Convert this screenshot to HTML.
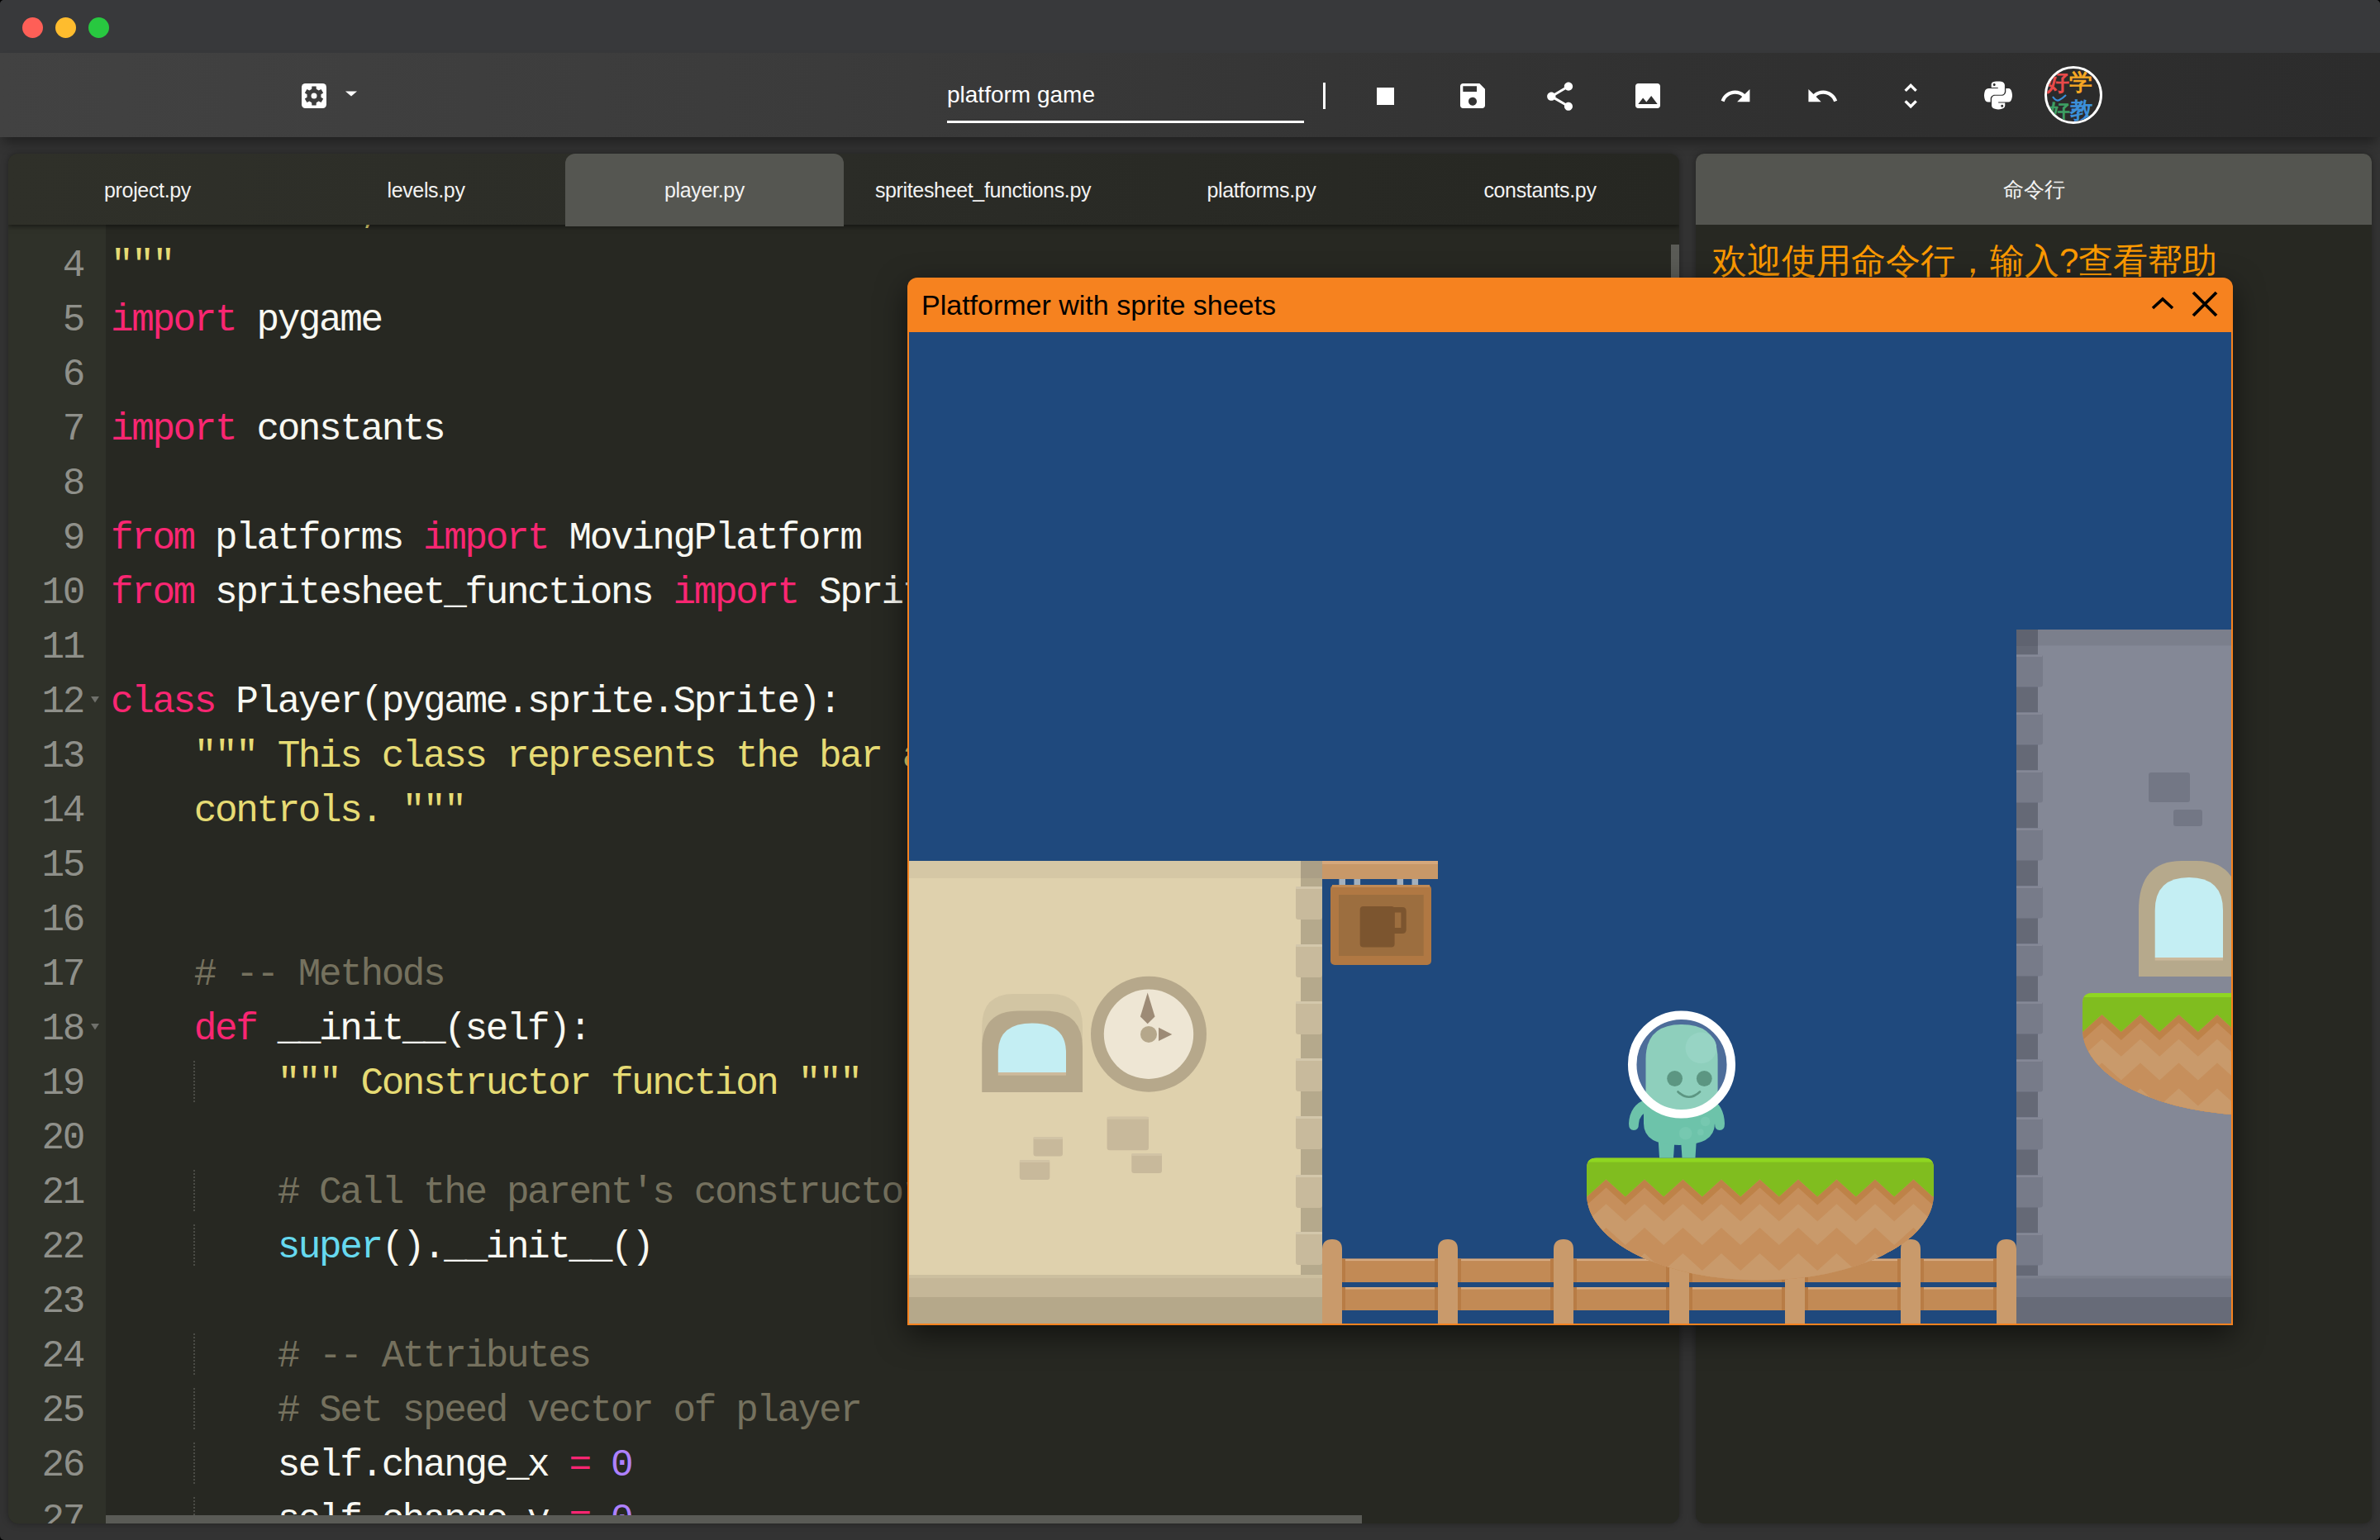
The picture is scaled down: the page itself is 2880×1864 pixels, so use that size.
<!DOCTYPE html>
<html><head><meta charset="utf-8">
<style>
*{margin:0;padding:0;box-sizing:border-box}
html{background:#000}
html,body{width:2880px;height:1864px;overflow:hidden;font-family:"Liberation Sans",sans-serif}
body{background:#333;border-radius:5px;position:relative}
.abs{position:absolute}
#title{left:0;top:0;width:2880px;height:64px;background:#38393b}
.tl{position:absolute;top:21px;width:25px;height:25px;border-radius:50%}
#toolbar{left:0;top:64px;width:2880px;height:102px;background:linear-gradient(90deg,#424242 0%,#3b3b3b 35%,#313131 70%,#2c2c2c 100%);box-shadow:0 10px 14px -4px rgba(0,0,0,.4);z-index:4}
#editor{left:10px;top:186px;width:2022px;height:1658px;background:#272822;border-radius:12px;overflow:hidden;box-shadow:0 0 8px rgba(0,0,0,.35)}
#tabs{left:0;top:0;width:2022px;height:86px;background:linear-gradient(90deg,#2f3029 0%,#2b2c27 50%,#262722 100%);box-shadow:0 2px 6px rgba(0,0,0,.5);z-index:5}
.tab{position:absolute;top:0;height:86px;width:337px;color:#f2f2f2;font-size:25px;text-align:center;line-height:88px;letter-spacing:-0.35px}
.tab.act{background:#555651;border-radius:12px 12px 0 0;height:88px}
#gutter{left:0;top:0;width:118px;height:1658px;background:#2f3129;overflow:hidden}
#code{left:118px;top:0;width:1904px;height:1658px;overflow:hidden}
pre.src{left:6px;top:37px;letter-spacing:-2.4px}
pre.lnum{right:27px;top:37px;text-align:right;color:#8f908a;letter-spacing:-2.4px}
.ln{position:absolute;right:0;width:118px;text-align:right;padding-right:27px;color:#8f908a}
pre{font-family:"Liberation Mono",monospace;font-size:46px;line-height:66px;color:#f8f8f2;position:absolute;white-space:pre}
.k{color:#f92672}.s{color:#e6db74}.c{color:#75715e}.b{color:#66d9ef}.n{color:#ae81ff}
#console{left:2052px;top:186px;width:818px;height:1658px;background:#272822;border-radius:10px;overflow:hidden;box-shadow:0 0 8px rgba(0,0,0,.35)}
#chead{left:0;top:0;width:818px;height:86px;background:#545550;color:#f2f2f2;font-size:25px;text-align:center;line-height:86px}
#game{z-index:10;left:1098px;top:336px;width:1604px;height:1268px;background:#f6821f;border-radius:12px 12px 0 0;box-shadow:0 12px 36px rgba(0,0,0,.55)}
#ghead{left:0;top:0;width:1604px;height:66px;color:#000;font-size:34px;line-height:66px;padding-left:17px}
.g{left:224px;width:2px;height:50px;background:repeating-linear-gradient(180deg,#4b4c46 0 2px,transparent 2px 4px);z-index:2}
@media (max-width:2000px){html{zoom:0.5}}
</style></head><body>
<div id="title" class="abs">
  <div class="tl" style="left:27px;background:#fe5f57"></div>
  <div class="tl" style="left:67px;background:#febc2e"></div>
  <div class="tl" style="left:107px;background:#28c840"></div>
</div>
<div id="toolbar" class="abs">
  <svg class="abs" style="left:365px;top:37px" width="30" height="30" viewBox="0 0 30 30"><rect x="0" y="0" width="30" height="30" rx="4.5" fill="#fff"/><g transform="translate(15,15)"><path fill="#3d3d3d" d="M-2.80,-8.13 L-2.63,-11.40 L2.63,-11.40 L2.80,-8.13 L5.64,-6.49 L8.56,-7.98 L11.19,-3.42 L8.44,-1.64 L8.44,1.64 L11.19,3.42 L8.56,7.98 L5.64,6.49 L2.80,8.13 L2.63,11.40 L-2.63,11.40 L-2.80,8.13 L-5.64,6.49 L-8.56,7.98 L-11.19,3.42 L-8.44,1.64 L-8.44,-1.64 L-11.19,-3.42 L-8.56,-7.98 L-5.64,-6.49Z"/><circle r="3.5" fill="#fff"/></g></svg>
  <svg class="abs" style="left:417px;top:45px" width="16" height="8" viewBox="0 0 16 8"><path d="M1 1.5 L15 1.5 L8 7.5Z" fill="#fff"/></svg>
  <div class="abs" style="left:1146px;top:31px;font-size:28px;color:#fff;line-height:40px">platform game</div>
  <div class="abs" style="left:1146px;top:82px;width:432px;height:2.5px;background:#fff"></div>
  <div class="abs" style="left:1601px;top:36px;width:2.5px;height:32px;background:#fff"></div>
  <div class="abs" style="left:1666px;top:42px;width:21px;height:21px;background:#fff"></div>
  <svg class="abs" style="left:1761.5px;top:31.8px" width="40" height="40" viewBox="0 0 24 24"><path fill="#fff" d="M17 3H5c-1.11 0-2 .9-2 2v14c0 1.1.89 2 2 2h14c1.1 0 2-.9 2-2V7l-4-4zm-5 16c-1.66 0-3-1.34-3-3s1.34-3 3-3 3 1.34 3 3-1.34 3-3 3zm3-10H5V5h10v4z"/></svg>
  <svg class="abs" style="left:1866.8px;top:31.6px" width="41.3" height="41.3" viewBox="0 0 24 24"><path fill="#fff" d="M18 16.08c-.76 0-1.44.3-1.96.77L8.91 12.7c.05-.23.09-.46.09-.7s-.04-.47-.09-.7l7.05-4.11c.54.5 1.250.81 2.04.81 1.66 0 3-1.34 3-3s-1.34-3-3-3-3 1.34-3 3c0 .24.04.47.09.7L8.04 9.81C7.5 9.310 6.79 9 6 9c-1.66 0-3 1.34-3 3s1.34 3 3 3c.79 0 1.5-.31 2.04-.81l7.12 4.16c-.05.21-.08.43-.08.65 0 1.61 1.31 2.92 2.92 2.92 1.61 0 2.92-1.31 2.92-2.92s-1.31-2.92-2.92-2.92z"/></svg>
  <svg class="abs" style="left:1974px;top:31.8px" width="40" height="40" viewBox="0 0 24 24"><path fill="#fff" d="M21 19V5c0-1.1-.9-2-2-2H5c-1.1 0-2 .9-2 2v14c0 1.1.9 2 2 2h14c1.1 0 2-.9 2-2zM8.5 13.5l2.5 3.01L14.5 12l4.5 6H5l3.5-4.5z"/></svg>
  <svg class="abs" style="left:2079.8px;top:31.9px" width="40.8" height="40.8" viewBox="0 0 24 24"><path fill="#fff" d="M18.4 10.6C16.55 8.99 14.150 8 11.5 8c-4.65 0-8.58 3.03-9.96 7.22L3.9 16c1.05-3.19 4.05-5.5 7.6-5.5 1.95 0 3.73.72 5.12 1.88L13 16h9V7l-3.6 3.6z"/></svg>
  <svg class="abs" style="left:2185.4px;top:31.9px" width="40.8" height="40.8" viewBox="0 0 24 24"><path fill="#fff" d="M12.5 8c-2.65 0-5.05.99-6.9 2.6L2 7v9h9l-3.62-3.620c1.39-1.16 3.16-1.88 5.12-1.88 3.54 0 6.550 2.31 7.6 5.5l2.37-.78C21.08 11.03 17.15 8 12.5 8z"/></svg>
  <svg class="abs" style="left:2291.5px;top:31.8px" width="40.3" height="40.3" viewBox="0 0 24 24"><path fill="#fff" d="M12 5.83L15.17 9l1.41-1.41L12 3 7.41 7.59 8.83 9 12 5.83zm0 12.34L8.83 15l-1.41 1.41L12 21l4.59-4.59L15.17 15 12 18.17z"/></svg>
  <svg class="abs" style="left:2401px;top:32.3px" width="34" height="38.9" viewBox="0 0 448 512"><path fill="#fff" d="M439.8 200.5c-7.7-30.9-22.3-54.2-53.4-54.2h-40.1v47.4c0 36.8-31.2 67.8-66.8 67.8H172.7c-29.2 0-53.4 25-53.4 54.3v101.8c0 29 25.2 46 53.4 54.3 33.8 9.9 66.3 11.7 106.8 0 26.9-7.8 53.4-23.5 53.4-54.3v-40.7H226.2v-13.6h160.2c31.1 0 42.6-21.7 53.4-54.2 11.2-33.5 10.7-65.7 0-108.6zM286.2 404c11.1 0 20.1 9.1 20.1 20.3 0 11.3-9 20.4-20.1 20.4-11 0-20.1-9.2-20.1-20.4.1-11.3 9.1-20.3 20.1-20.3zM167.8 248.1h106.8c29.7 0 53.4-24.5 53.4-54.3V91.9c0-29-24.4-50.7-53.4-55.6-35.8-5.9-74.7-5.6-106.8.1-45.2 8-53.4 24.7-53.4 55.6v40.7h106.9v13.6h-147c-31.1 0-58.3 18.7-66.8 54.2-9.8 40.7-10.200 66.1 0 108.6 7.6 31.6 25.7 54.2 56.8 54.2H101v-48.8c0-35.3 30.5-66.4 66.8-66.4zm-6.7-142.6c-11.1 0-20.1-9.1-20.1-20.3.1-11.3 9-20.4 20.1-20.4 11 0 20.1 9.2 20.1 20.4s-9 20.3-20.1 20.3z"/></svg>
  <div class="abs" style="left:2474px;top:16px;width:70px;height:70px;border-radius:50%;border:3px solid #fff;background:#2b2b2b;overflow:hidden">
    <div class="abs" style="left:-1px;top:2px;font-size:28px;line-height:30px;font-weight:bold;color:#e84a4a">好</div>
    <div class="abs" style="left:27px;top:2px;font-size:28px;line-height:30px;font-weight:bold;color:#f5a623">学</div>
    <div class="abs" style="left:2px;top:38px;font-size:26px;line-height:28px;font-weight:bold;color:#3d9e63">好</div>
    <div class="abs" style="left:28px;top:36px;font-size:28px;line-height:30px;font-weight:bold;color:#3b8fd9">教</div>
    <svg class="abs" style="left:6px;top:31px" width="18" height="10" viewBox="0 0 18 10"><path d="M1,3 Q5,9 9,7 Q13,5 17,1" stroke="#3b8fd9" stroke-width="2.2" fill="none"/></svg>
  </div>
</div>
<div id="editor" class="abs">
  <div id="tabs" class="abs">
    <div class="tab" style="left:0">project.py</div>
    <div class="tab" style="left:337px">levels.py</div>
    <div class="tab act" style="left:674px">player.py</div>
    <div class="tab" style="left:1011px">spritesheet_functions.py</div>
    <div class="tab" style="left:1348px">platforms.py</div>
    <div class="tab" style="left:1685px">constants.py</div>
  </div>
  <div id="gutter" class="abs"><pre class="lnum">3
4
5
6
7
8
9
10
11
12
13
14
15
16
17
18
19
20
21
22
23
24
25
26
27</pre></div>
    <div class="abs" style="left:118px;top:1648px;width:1520px;height:10px;background:#5a5b56;z-index:3"></div>
  <div class="abs" style="left:2012px;top:110px;width:10px;height:1200px;background:#5a5b56;z-index:3"></div>
  <div class="abs g" style="top:1098px"></div><div class="abs g" style="top:1230px"></div><div class="abs g" style="top:1296px"></div><div class="abs g" style="top:1428px"></div><div class="abs g" style="top:1494px"></div><div class="abs g" style="top:1560px"></div><div class="abs g" style="top:1626px"></div>
  <svg class="abs" style="left:100px;top:657.3px;z-index:2" width="10" height="7.5" viewBox="0 0 10 7.5"><path d="M0,0 L10,0 L5,7.5Z" fill="#6f706b"/></svg><svg class="abs" style="left:100px;top:1053.3px;z-index:2" width="10" height="7.5" viewBox="0 0 10 7.5"><path d="M0,0 L10,0 L5,7.5Z" fill="#6f706b"/></svg>
  <div id="code" class="abs"><pre class="src"><span class="s">Modified fro,</span>
<span class="s">"""</span>
<span class="k">import</span> pygame

<span class="k">import</span> constants

<span class="k">from</span> platforms <span class="k">import</span> MovingPlatform
<span class="k">from</span> spritesheet_functions <span class="k">import</span> SpriteSheet

<span class="k">class</span> Player(pygame.sprite.Sprite):
    <span class="s">""" This class represents the bar at the bottom that the player</span>
<span class="s">    controls. """</span>


    <span class="c"># -- Methods</span>
    <span class="k">def</span> __init__(self):
        <span class="s">""" Constructor function """</span>

        <span class="c"># Call the parent's constructor</span>
        <span class="b">super</span>().__init__()

        <span class="c"># -- Attributes</span>
        <span class="c"># Set speed vector of player</span>
        self.change_x <span class="k">=</span> <span class="n">0</span>
        self.change_y <span class="k">=</span> <span class="n">0</span></pre></div>
</div>
<div id="console" class="abs">
  <div id="chead" class="abs">命令行</div>
  <div class="abs" style="left:20px;top:100px;font-size:42px;line-height:60px;color:#fd9a00;white-space:nowrap">欢迎使用命令行，输入?查看帮助</div>
</div>
<div id="game" class="abs">
  <div id="ghead" class="abs">Platformer with sprite sheets</div>
  <svg class="abs" style="left:1504px;top:22px" width="30" height="18" viewBox="0 0 30 18"><path d="M3,15 L15,4 L27,15" stroke="#000" stroke-width="3.6" fill="none"/></svg>
  <svg class="abs" style="left:1554px;top:16px" width="32" height="32" viewBox="0 0 32 32"><path d="M2,2 L30,30 M30,2 L2,30" stroke="#000" stroke-width="3.8" fill="none"/></svg>
<svg class="abs" style="left:2px;top:66px" width="1600" height="1200" viewBox="0 0 1600 1200">
<defs>
</defs>
<rect width="1600" height="1200" fill="#1f497d"/>
<rect x="0" y="640" width="474" height="502" fill="#dfd1ad"/>
<rect x="0" y="640" width="474" height="21" fill="#d5c7a5"/>
<rect x="474" y="640" width="26" height="502" fill="#b5a98c"/>
<rect x="474" y="640" width="26" height="21" fill="#ab9f86"/>
<rect x="468" y="671" width="32" height="40" rx="3" fill="#c8ba9c"/>
<rect x="468" y="671" width="32" height="3" rx="1" fill="#d3c7ab"/>
<rect x="468" y="741" width="32" height="40" rx="3" fill="#c8ba9c"/>
<rect x="468" y="741" width="32" height="3" rx="1" fill="#d3c7ab"/>
<rect x="468" y="810" width="32" height="40" rx="3" fill="#c8ba9c"/>
<rect x="468" y="810" width="32" height="3" rx="1" fill="#d3c7ab"/>
<rect x="468" y="879" width="32" height="40" rx="3" fill="#c8ba9c"/>
<rect x="468" y="879" width="32" height="3" rx="1" fill="#d3c7ab"/>
<rect x="468" y="949" width="32" height="40" rx="3" fill="#c8ba9c"/>
<rect x="468" y="949" width="32" height="3" rx="1" fill="#d3c7ab"/>
<rect x="468" y="1020" width="32" height="40" rx="3" fill="#c8ba9c"/>
<rect x="468" y="1020" width="32" height="3" rx="1" fill="#d3c7ab"/>
<rect x="468" y="1089" width="32" height="40" rx="3" fill="#c8ba9c"/>
<rect x="468" y="1089" width="32" height="3" rx="1" fill="#d3c7ab"/>
<rect x="0" y="1141" width="500" height="27" fill="#c5b798"/>
<rect x="0" y="1141" width="500" height="4" fill="#ccbf9f"/>
<rect x="0" y="1168" width="500" height="32" fill="#b5a88a"/>
<path d="M88.3,840 Q88.3,801 127,801 L171,801 Q210,801 210,840 L210,920 L88.3,920 Z" fill="#c9bc9c" opacity="0.6"/>
<path d="M88.3,866 Q88.3,821.5 133,821.5 L165,821.5 Q210,821.5 210,866 L210,920 L88.3,920 Z" fill="#b6a88b"/>
<path d="M107.8,896 L107.8,872 Q107.8,836.6 149,836.6 Q190,836.6 190,872 L190,896 Z" fill="#c4eef3"/>
<rect x="107.8" y="896" width="82.2" height="3.7" fill="#ccb99b"/>
<circle cx="290" cy="849.7" r="70" fill="#b6a88b"/>
<circle cx="290" cy="849.8" r="54.2" fill="#eee6d4"/>
<path d="M288.7,799.4 L297.5,828.4 L288.7,837.2 L279.9,828.4 Z" fill="#9d8b76"/>
<circle cx="290" cy="849.9" r="10" fill="#b5a78b"/>
<path d="M302,841.7 L318.3,849.9 L302,858 Z" fill="#9d8b76"/>
<rect x="150.5" y="974" width="35.5" height="23.4" rx="3" fill="#c8b99b"/>
<rect x="150.5" y="974" width="35.5" height="3" rx="1" fill="#d1c3a5"/>
<rect x="133.8" y="1002" width="36.5" height="24.0" rx="3" fill="#c8b99b"/>
<rect x="133.8" y="1002" width="36.5" height="3" rx="1" fill="#d1c3a5"/>
<rect x="239.6" y="949.8" width="50.4" height="40.4" rx="3" fill="#c8b99b"/>
<rect x="239.6" y="949.8" width="50.4" height="3" rx="1" fill="#d1c3a5"/>
<rect x="269.3" y="994" width="36.7" height="24.0" rx="3" fill="#c8b99b"/>
<rect x="269.3" y="994" width="36.7" height="3" rx="1" fill="#d1c3a5"/>
<rect x="500" y="640" width="140" height="22" fill="#c89868"/>
<rect x="500" y="640" width="140" height="4" fill="#d5a77b"/>
<rect x="520.4" y="662" width="7.6" height="7" fill="#a3b0bd"/>
<rect x="538.5" y="662" width="7.6" height="7" fill="#a3b0bd"/>
<rect x="590.5" y="662" width="7.6" height="7" fill="#a3b0bd"/>
<rect x="608.5" y="662" width="7.6" height="7" fill="#a3b0bd"/>
<rect x="510" y="669" width="122" height="97" rx="5" fill="#b07843"/>
<rect x="512" y="669" width="118" height="3" fill="#c08a55"/>
<rect x="520" y="681" width="102.7" height="74" fill="#9c6e3f"/>
<rect x="545.7" y="695" width="41.9" height="49.4" rx="4" fill="#7c552f"/>
<path d="M585,696 L597,696 Q601.7,696 601.7,701 L601.7,723 Q601.7,728 597,728 L585,728 Z M587.6,702.5 L587.6,721 L595.4,721 L595.4,702.5 Z" fill="#7c552f" fill-rule="evenodd"/>
<rect x="1340" y="360" width="260" height="840" fill="#848896"/>
<rect x="1340" y="360" width="260" height="19.4" fill="#7b7f8c"/>
<rect x="1340" y="360" width="26" height="782" fill="#656976"/>
<rect x="1340" y="360" width="26" height="20" fill="#5f6370"/>
<path d="M1340,390.4 L1369,390.4 Q1372,390.4 1372,393.4 L1372,426.4 Q1372,429.4 1369,429.4 L1340,429.4 Z" fill="#777b89"/>
<rect x="1340" y="390.4" width="31" height="2.5" fill="#858997"/>
<path d="M1340,460.4 L1369,460.4 Q1372,460.4 1372,463.4 L1372,496.4 Q1372,499.4 1369,499.4 L1340,499.4 Z" fill="#777b89"/>
<rect x="1340" y="460.4" width="31" height="2.5" fill="#858997"/>
<path d="M1340,530.4 L1369,530.4 Q1372,530.4 1372,533.4 L1372,566.4 Q1372,569.4 1369,569.4 L1340,569.4 Z" fill="#777b89"/>
<rect x="1340" y="530.4" width="31" height="2.5" fill="#858997"/>
<path d="M1340,600.4 L1369,600.4 Q1372,600.4 1372,603.4 L1372,636.4 Q1372,639.4 1369,639.4 L1340,639.4 Z" fill="#777b89"/>
<rect x="1340" y="600.4" width="31" height="2.5" fill="#858997"/>
<path d="M1340,670.4 L1369,670.4 Q1372,670.4 1372,673.4 L1372,706.4 Q1372,709.4 1369,709.4 L1340,709.4 Z" fill="#777b89"/>
<rect x="1340" y="670.4" width="31" height="2.5" fill="#858997"/>
<path d="M1340,740.4 L1369,740.4 Q1372,740.4 1372,743.4 L1372,776.4 Q1372,779.4 1369,779.4 L1340,779.4 Z" fill="#777b89"/>
<rect x="1340" y="740.4" width="31" height="2.5" fill="#858997"/>
<path d="M1340,810.4 L1369,810.4 Q1372,810.4 1372,813.4 L1372,846.4 Q1372,849.4 1369,849.4 L1340,849.4 Z" fill="#777b89"/>
<rect x="1340" y="810.4" width="31" height="2.5" fill="#858997"/>
<path d="M1340,880.4 L1369,880.4 Q1372,880.4 1372,883.4 L1372,916.4 Q1372,919.4 1369,919.4 L1340,919.4 Z" fill="#777b89"/>
<rect x="1340" y="880.4" width="31" height="2.5" fill="#858997"/>
<path d="M1340,950.4 L1369,950.4 Q1372,950.4 1372,953.4 L1372,986.4 Q1372,989.4 1369,989.4 L1340,989.4 Z" fill="#777b89"/>
<rect x="1340" y="950.4" width="31" height="2.5" fill="#858997"/>
<path d="M1340,1020.4 L1369,1020.4 Q1372,1020.4 1372,1023.4 L1372,1056.4 Q1372,1059.4 1369,1059.4 L1340,1059.4 Z" fill="#777b89"/>
<rect x="1340" y="1020.4" width="31" height="2.5" fill="#858997"/>
<path d="M1340,1090.4 L1369,1090.4 Q1372,1090.4 1372,1093.4 L1372,1126.4 Q1372,1129.4 1369,1129.4 L1340,1129.4 Z" fill="#777b89"/>
<rect x="1340" y="1090.4" width="31" height="2.5" fill="#858997"/>
<rect x="1340" y="1142.6" width="260" height="25.4" fill="#737785"/>
<rect x="1340" y="1142.6" width="260" height="3" fill="#7b7f8c"/>
<rect x="1340" y="1168" width="260" height="32" fill="#676b78"/>
<rect x="1500" y="533" width="50" height="36" rx="3" fill="#737785"/>
<rect x="1530" y="578" width="35" height="20" rx="3" fill="#737785"/>
<path d="M1488,700 Q1488,640 1540,640 L1558,640 Q1610,640 1610,700 L1610,780 L1488,780 Z" fill="#b6a98c"/>
<path d="M1507.7,757 L1507.7,700 Q1507.7,660 1549,660 Q1590,660 1590,700 L1590,757 Z" fill="#c4eef3"/>
<rect x="1507.7" y="757" width="82.3" height="3.5" fill="#ccb99b"/>
<rect x="524" y="1121.6" width="116" height="28.4" fill="#c28a55"/>
<rect x="524" y="1121.6" width="116" height="2.5" fill="#d6aa80"/>
<rect x="524" y="1121.6" width="4" height="28.4" fill="#b87c45"/>
<rect x="636" y="1121.6" width="4" height="28.4" fill="#b87c45"/>
<rect x="524" y="1156" width="116" height="28.0" fill="#c28a55"/>
<rect x="524" y="1156" width="116" height="2.5" fill="#d6aa80"/>
<rect x="524" y="1156" width="4" height="28.0" fill="#b87c45"/>
<rect x="636" y="1156" width="4" height="28.0" fill="#b87c45"/>
<rect x="664" y="1121.6" width="116" height="28.4" fill="#c28a55"/>
<rect x="664" y="1121.6" width="116" height="2.5" fill="#d6aa80"/>
<rect x="664" y="1121.6" width="4" height="28.4" fill="#b87c45"/>
<rect x="776" y="1121.6" width="4" height="28.4" fill="#b87c45"/>
<rect x="664" y="1156" width="116" height="28.0" fill="#c28a55"/>
<rect x="664" y="1156" width="116" height="2.5" fill="#d6aa80"/>
<rect x="664" y="1156" width="4" height="28.0" fill="#b87c45"/>
<rect x="776" y="1156" width="4" height="28.0" fill="#b87c45"/>
<rect x="804" y="1121.6" width="116" height="28.4" fill="#c28a55"/>
<rect x="804" y="1121.6" width="116" height="2.5" fill="#d6aa80"/>
<rect x="804" y="1121.6" width="4" height="28.4" fill="#b87c45"/>
<rect x="916" y="1121.6" width="4" height="28.4" fill="#b87c45"/>
<rect x="804" y="1156" width="116" height="28.0" fill="#c28a55"/>
<rect x="804" y="1156" width="116" height="2.5" fill="#d6aa80"/>
<rect x="804" y="1156" width="4" height="28.0" fill="#b87c45"/>
<rect x="916" y="1156" width="4" height="28.0" fill="#b87c45"/>
<rect x="944" y="1121.6" width="116" height="28.4" fill="#c28a55"/>
<rect x="944" y="1121.6" width="116" height="2.5" fill="#d6aa80"/>
<rect x="944" y="1121.6" width="4" height="28.4" fill="#b87c45"/>
<rect x="1056" y="1121.6" width="4" height="28.4" fill="#b87c45"/>
<rect x="944" y="1156" width="116" height="28.0" fill="#c28a55"/>
<rect x="944" y="1156" width="116" height="2.5" fill="#d6aa80"/>
<rect x="944" y="1156" width="4" height="28.0" fill="#b87c45"/>
<rect x="1056" y="1156" width="4" height="28.0" fill="#b87c45"/>
<rect x="1084" y="1121.6" width="116" height="28.4" fill="#c28a55"/>
<rect x="1084" y="1121.6" width="116" height="2.5" fill="#d6aa80"/>
<rect x="1084" y="1121.6" width="4" height="28.4" fill="#b87c45"/>
<rect x="1196" y="1121.6" width="4" height="28.4" fill="#b87c45"/>
<rect x="1084" y="1156" width="116" height="28.0" fill="#c28a55"/>
<rect x="1084" y="1156" width="116" height="2.5" fill="#d6aa80"/>
<rect x="1084" y="1156" width="4" height="28.0" fill="#b87c45"/>
<rect x="1196" y="1156" width="4" height="28.0" fill="#b87c45"/>
<rect x="1224" y="1121.6" width="92" height="28.4" fill="#c28a55"/>
<rect x="1224" y="1121.6" width="92" height="2.5" fill="#d6aa80"/>
<rect x="1224" y="1121.6" width="4" height="28.4" fill="#b87c45"/>
<rect x="1312" y="1121.6" width="4" height="28.4" fill="#b87c45"/>
<rect x="1224" y="1156" width="92" height="28.0" fill="#c28a55"/>
<rect x="1224" y="1156" width="92" height="2.5" fill="#d6aa80"/>
<rect x="1224" y="1156" width="4" height="28.0" fill="#b87c45"/>
<rect x="1312" y="1156" width="4" height="28.0" fill="#b87c45"/>
<path d="M500,1200 L500,1110 Q500,1098 512,1098 Q524,1098 524,1110 L524,1200 Z" fill="#c99a6b"/>
<path d="M640,1200 L640,1110 Q640,1098 652,1098 Q664,1098 664,1110 L664,1200 Z" fill="#c99a6b"/>
<path d="M780,1200 L780,1110 Q780,1098 792,1098 Q804,1098 804,1110 L804,1200 Z" fill="#c99a6b"/>
<path d="M920,1200 L920,1110 Q920,1098 932,1098 Q944,1098 944,1110 L944,1200 Z" fill="#c99a6b"/>
<path d="M1060,1200 L1060,1110 Q1060,1098 1072,1098 Q1084,1098 1084,1110 L1084,1200 Z" fill="#c99a6b"/>
<path d="M1200,1200 L1200,1110 Q1200,1098 1212,1098 Q1224,1098 1224,1110 L1224,1200 Z" fill="#c99a6b"/>
<path d="M1316,1200 L1316,1110 Q1316,1098 1328,1098 Q1340,1098 1340,1110 L1340,1200 Z" fill="#c99a6b"/>
<clipPath id="cp1"><path d="M820,1011.6 Q820,999.6 832,999.6 L1228,999.6 Q1240,999.6 1240,1011.6 L1240,1043.6 A210.0,104 0 0 1 820,1043.6 Z"/></clipPath>
<g clip-path="url(#cp1)">
<rect x="820" y="999.6" width="420" height="160" fill="#c99a6b"/>
<path d="M815.0,1041.9 L820.2,1046.6 L843.5,1025.6 L866.8,1046.6 L890.0,1025.6 L913.2,1046.6 L936.5,1025.6 L959.8,1046.6 L983.0,1025.6 L1006.2,1046.6 L1029.5,1025.6 L1052.8,1046.6 L1076.0,1025.6 L1099.2,1046.6 L1122.5,1025.6 L1145.8,1046.6 L1169.0,1025.6 L1192.2,1046.6 L1215.5,1025.6 L1238.8,1046.6 L1245.0,1041.0 L1245.0,1199 L815.0,1199 Z" fill="#be8248"/>
<path d="M815.0,1051.9 L820.2,1056.6 L843.5,1035.6 L866.8,1056.6 L890.0,1035.6 L913.2,1056.6 L936.5,1035.6 L959.8,1056.6 L983.0,1035.6 L1006.2,1056.6 L1029.5,1035.6 L1052.8,1056.6 L1076.0,1035.6 L1099.2,1056.6 L1122.5,1035.6 L1145.8,1056.6 L1169.0,1035.6 L1192.2,1056.6 L1215.5,1035.6 L1238.8,1056.6 L1245.0,1051.0 L1245.0,1199 L815.0,1199 Z" fill="#c68f5c"/>
<path d="M815.0,1071.6 L820.2,1076.3 L843.5,1055.3 L866.8,1076.3 L890.0,1055.3 L913.2,1076.3 L936.5,1055.3 L959.8,1076.3 L983.0,1055.3 L1006.2,1076.3 L1029.5,1055.3 L1052.8,1076.3 L1076.0,1055.3 L1099.2,1076.3 L1122.5,1055.3 L1145.8,1076.3 L1169.0,1055.3 L1192.2,1076.3 L1215.5,1055.3 L1238.8,1076.3 L1245.0,1070.7 L1245.0,1199 L815.0,1199 Z" fill="#c99a6b"/>
<path d="M815.0,1100.3 L820.2,1105.0 L843.5,1084.0 L866.8,1105.0 L890.0,1084.0 L913.2,1105.0 L936.5,1084.0 L959.8,1105.0 L983.0,1084.0 L1006.2,1105.0 L1029.5,1084.0 L1052.8,1105.0 L1076.0,1084.0 L1099.2,1105.0 L1122.5,1084.0 L1145.8,1105.0 L1169.0,1084.0 L1192.2,1105.0 L1215.5,1084.0 L1238.8,1105.0 L1245.0,1099.4 L1245.0,1199 L815.0,1199 Z" fill="#c68f5c"/>
<path d="M815.0,1131.3 L820.2,1136.0 L843.5,1115.0 L866.8,1136.0 L890.0,1115.0 L913.2,1136.0 L936.5,1115.0 L959.8,1136.0 L983.0,1115.0 L1006.2,1136.0 L1029.5,1115.0 L1052.8,1136.0 L1076.0,1115.0 L1099.2,1136.0 L1122.5,1115.0 L1145.8,1136.0 L1169.0,1115.0 L1192.2,1136.0 L1215.5,1115.0 L1238.8,1136.0 L1245.0,1130.4 L1245.0,1199 L815.0,1199 Z" fill="#c99a6b"/>
<path d="M815.0,994 L1245.0,994 L1245.0,1041.0 L1238.8,1046.6 L1215.5,1025.6 L1192.2,1046.6 L1169.0,1025.6 L1145.8,1046.6 L1122.5,1025.6 L1099.2,1046.6 L1076.0,1025.6 L1052.8,1046.6 L1029.5,1025.6 L1006.2,1046.6 L983.0,1025.6 L959.8,1046.6 L936.5,1025.6 L913.2,1046.6 L890.0,1025.6 L866.8,1046.6 L843.5,1025.6 L820.2,1046.6 L815.0,1041.9 Z" fill="#80bd1f"/>
<rect x="820" y="999.6" width="420" height="5" fill="#8fd621"/>
</g>
<clipPath id="cp2"><path d="M1420,812 Q1420,800 1432,800 L1828,800 Q1840,800 1840,812 L1840,844 A210.0,104 0 0 1 1420,844 Z"/></clipPath>
<g clip-path="url(#cp2)">
<rect x="1420" y="800" width="420" height="160" fill="#c99a6b"/>
<path d="M1415.0,842.3 L1420.2,847.0 L1443.5,826.0 L1466.8,847.0 L1490.0,826.0 L1513.2,847.0 L1536.5,826.0 L1559.8,847.0 L1583.0,826.0 L1606.2,847.0 L1629.5,826.0 L1652.8,847.0 L1676.0,826.0 L1699.2,847.0 L1722.5,826.0 L1745.8,847.0 L1769.0,826.0 L1792.2,847.0 L1815.5,826.0 L1838.8,847.0 L1845.0,841.4 L1845.0,1000 L1415.0,1000 Z" fill="#be8248"/>
<path d="M1415.0,852.3 L1420.2,857.0 L1443.5,836.0 L1466.8,857.0 L1490.0,836.0 L1513.2,857.0 L1536.5,836.0 L1559.8,857.0 L1583.0,836.0 L1606.2,857.0 L1629.5,836.0 L1652.8,857.0 L1676.0,836.0 L1699.2,857.0 L1722.5,836.0 L1745.8,857.0 L1769.0,836.0 L1792.2,857.0 L1815.5,836.0 L1838.8,857.0 L1845.0,851.4 L1845.0,1000 L1415.0,1000 Z" fill="#c68f5c"/>
<path d="M1415.0,872.0 L1420.2,876.7 L1443.5,855.7 L1466.8,876.7 L1490.0,855.7 L1513.2,876.7 L1536.5,855.7 L1559.8,876.7 L1583.0,855.7 L1606.2,876.7 L1629.5,855.7 L1652.8,876.7 L1676.0,855.7 L1699.2,876.7 L1722.5,855.7 L1745.8,876.7 L1769.0,855.7 L1792.2,876.7 L1815.5,855.7 L1838.8,876.7 L1845.0,871.1 L1845.0,1000 L1415.0,1000 Z" fill="#c99a6b"/>
<path d="M1415.0,900.7 L1420.2,905.4 L1443.5,884.4 L1466.8,905.4 L1490.0,884.4 L1513.2,905.4 L1536.5,884.4 L1559.8,905.4 L1583.0,884.4 L1606.2,905.4 L1629.5,884.4 L1652.8,905.4 L1676.0,884.4 L1699.2,905.4 L1722.5,884.4 L1745.8,905.4 L1769.0,884.4 L1792.2,905.4 L1815.5,884.4 L1838.8,905.4 L1845.0,899.8 L1845.0,1000 L1415.0,1000 Z" fill="#c68f5c"/>
<path d="M1415.0,931.7 L1420.2,936.4 L1443.5,915.4 L1466.8,936.4 L1490.0,915.4 L1513.2,936.4 L1536.5,915.4 L1559.8,936.4 L1583.0,915.4 L1606.2,936.4 L1629.5,915.4 L1652.8,936.4 L1676.0,915.4 L1699.2,936.4 L1722.5,915.4 L1745.8,936.4 L1769.0,915.4 L1792.2,936.4 L1815.5,915.4 L1838.8,936.4 L1845.0,930.8 L1845.0,1000 L1415.0,1000 Z" fill="#c99a6b"/>
<path d="M1415.0,795 L1845.0,795 L1845.0,841.4 L1838.8,847.0 L1815.5,826.0 L1792.2,847.0 L1769.0,826.0 L1745.8,847.0 L1722.5,826.0 L1699.2,847.0 L1676.0,826.0 L1652.8,847.0 L1629.5,826.0 L1606.2,847.0 L1583.0,826.0 L1559.8,847.0 L1536.5,826.0 L1513.2,847.0 L1490.0,826.0 L1466.8,847.0 L1443.5,826.0 L1420.2,847.0 L1415.0,842.3 Z" fill="#80bd1f"/>
<rect x="1420" y="800" width="420" height="5" fill="#8fd621"/>
</g>
<g>
<path d="M906.5,975 L926.6,975 L925,999.6 L908,999.6 Z" fill="#6dc3aa"/>
<path d="M933.8,975 L953,975 L951.5,999.6 L935.5,999.6 Z" fill="#6dc3aa"/>
<path d="M893,928 Q872,935 871,958 Q871,966 877,966 Q883,966 883,958 Q884,946 895,943 Z" fill="#6dc3aa"/>
<path d="M970,928 Q986,935 987,958 Q987,966 981,966 Q975,966 975,958 Q974,946 968,943 Z" fill="#6dc3aa"/>
<path d="M889,900 L975,900 L975,958 Q975,984 932,984 Q889,984 889,958 Z" fill="#6dc3aa"/>
<circle cx="987" cy="971" r="0" fill="#7acbb5"/>
<circle cx="939.6" cy="969.7" r="7.8" fill="#76c8b0"/>
<circle cx="963.6" cy="955.4" r="5.8" fill="#76c8b0"/>
<circle cx="957.8" cy="968.4" r="3.9" fill="#76c8b0"/>
<circle cx="935" cy="886.5" r="60" fill="#4d6d9a"/>
<clipPath id="helm"><circle cx="935" cy="886.5" r="56"/></clipPath>
<g clip-path="url(#helm)">
<path d="M891.5,880 Q891.5,838 935,838 Q978.6,838 978.6,880 L978.6,955 L891.5,955 Z" fill="#8ecfbc"/>
<circle cx="958.4" cy="866.4" r="18.8" fill="#97d4c4"/>
<circle cx="926.6" cy="903.5" r="9.4" fill="#5c9682"/>
<circle cx="962.3" cy="903.5" r="9.4" fill="#5c9682"/>
<path d="M930.5,919.5 Q943.7,932 957,919.5" stroke="#5c9682" stroke-width="2.6" fill="none" stroke-linecap="round"/>
</g>
<circle cx="935" cy="886.5" r="59.8" fill="none" stroke="#fff" stroke-width="10.5"/>
</g>
</svg>
</div>
</body></html>
